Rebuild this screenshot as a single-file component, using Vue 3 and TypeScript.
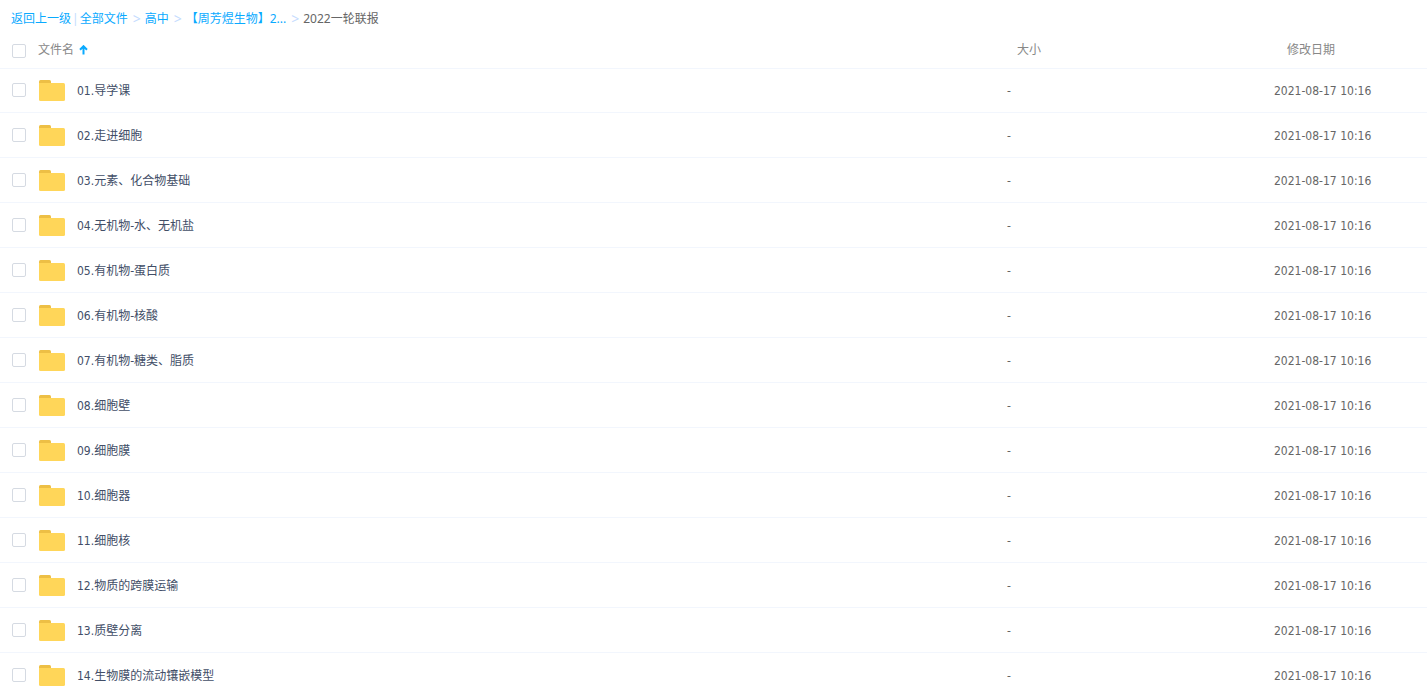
<script setup lang="ts">
import { computed, ref } from 'vue'

interface Folder {
  name: string
  size: string
  modified: string
}

const names: string[] = [
  '01.导学课',
  '02.走进细胞',
  '03.元素、化合物基础',
  '04.无机物-水、无机盐',
  '05.有机物-蛋白质',
  '06.有机物-核酸',
  '07.有机物-糖类、脂质',
  '08.细胞壁',
  '09.细胞膜',
  '10.细胞器',
  '11.细胞核',
  '12.物质的跨膜运输',
  '13.质壁分离',
  '14.生物膜的流动镶嵌模型',
]

const folders: Folder[] = names.map((name) => ({ name, size: '-', modified: '2021-08-17 10:16' }))
const crumbs: string[] = ['全部文件', '高中', '【周芳煜生物】2...']
const selected = ref<string[]>([])

const allSelected = computed<boolean>({
  get: () => selected.value.length === folders.length,
  set: (on) => {
    selected.value = on ? [...names] : []
  },
})
</script>

<template>
  <main class="browser">
    <nav class="crumbs" aria-label="路径">
      <a class="back" href="#">返回上一级</a>
      <span class="bar">|</span>
      <template v-for="crumb in crumbs" :key="crumb">
        <a href="#">{{ crumb }}</a>
        <span class="sep">&gt;</span>
      </template>
      <span class="current">2022一轮联报</span>
    </nav>
    <table class="files">
      <colgroup>
        <col />
        <col class="col-size" />
        <col class="col-date" />
      </colgroup>
      <thead>
        <tr>
          <th scope="col">
            <div class="head-name">
              <input v-model="allSelected" class="check" type="checkbox" aria-label="全选" />
              <button class="sort" type="button">
                文件名
                <svg width="9" height="10" viewBox="0 0 9 10" aria-hidden="true">
                  <path d="M4.5 9.5V1.5M1 4.7L4.5 1.2L8 4.7" fill="none" stroke="#09aaff" stroke-width="2" />
                </svg>
              </button>
            </div>
          </th>
          <th scope="col" class="head-size">大小</th>
          <th scope="col" class="head-date">修改日期</th>
        </tr>
      </thead>
      <tbody>
        <tr v-for="folder in folders" :key="folder.name">
          <td>
            <div class="name">
              <input v-model="selected" class="check" type="checkbox" :value="folder.name" :aria-label="folder.name" />
              <svg class="folder" width="26" height="21" viewBox="0 0 26 21" aria-hidden="true">
                <path d="M0 4V1.5Q0 0 1.5 0H10.5Q12 0 12 1.5V4Z" fill="#edbf45" />
                <path d="M0 3H24.5Q26 3 26 4.5V19.5Q26 21 24.5 21H1.5Q0 21 0 19.5Z" fill="#ffd659" />
              </svg>
              <a href="#">{{ folder.name }}</a>
            </div>
          </td>
          <td>{{ folder.size }}</td>
          <td>{{ folder.modified }}</td>
        </tr>
      </tbody>
    </table>
  </main>
</template>

<style>
body {
  margin: 0;
  background: #fff;
}
html {
  overflow: hidden;
}
</style>

<style scoped>
.browser {
  font: 12px/16px "Noto Sans", "Noto Sans CJK SC", sans-serif;
  color: #666;
}
a {
  color: #09aaff;
  text-decoration: none;
}
.crumbs {
  display: flex;
  align-items: center;
  height: 37px;
  padding-left: 11px;
  white-space: nowrap;
}
.bar {
  margin: 0 1px;
  color: #c4dbfe;
}
.sep {
  margin: 0 4px 0 5px;
  color: #c4dbfe;
  font-size: 14px;
}
.files {
  width: 100%;
  table-layout: fixed;
  border-collapse: separate;
  border-spacing: 0;
}
.col-size {
  width: 267px;
}
.col-date {
  width: 153px;
}
th {
  height: 32px;
  box-sizing: border-box;
  padding: 0 0 6px;
  border-bottom: 1px solid #f2f6fd;
  color: #888;
  font-weight: 400;
  text-align: left;
}
.head-size {
  padding-left: 10px;
}
.head-date {
  padding-left: 13px;
}
.head-name,
.name {
  display: flex;
  align-items: center;
  padding-left: 12px;
}
.head-name .check {
  margin-top: 2px;
}
.check {
  appearance: none;
  box-sizing: border-box;
  flex: none;
  width: 14px;
  height: 14px;
  margin: 0 12px 0 0;
  border: 1px solid #d5dae2;
  border-radius: 2px;
  background: #fff;
}
.name .check {
  margin-bottom: 1px;
}
.check:checked {
  border-color: #09aaff;
  background: #09aaff;
}
.sort {
  display: flex;
  align-items: center;
  gap: 5px;
  padding: 0;
  border: 0;
  background: none;
  color: inherit;
  font: inherit;
  cursor: pointer;
}
td {
  height: 45px;
  box-sizing: border-box;
  padding: 12px 0 0;
  border-bottom: 1px solid #f2f6fd;
  font-family: "DejaVu Sans Condensed", "Noto Sans", "Noto Sans CJK SC", sans-serif;
  line-height: 23px;
  vertical-align: top;
}
tbody tr:first-child td {
  height: 44px;
  padding-top: 11px;
}
.folder {
  flex: none;
  margin: 0 12px 0 1px;
}
.name a {
  padding-top: 2px;
  color: #424e67;
  line-height: 19px;
}
</style>
